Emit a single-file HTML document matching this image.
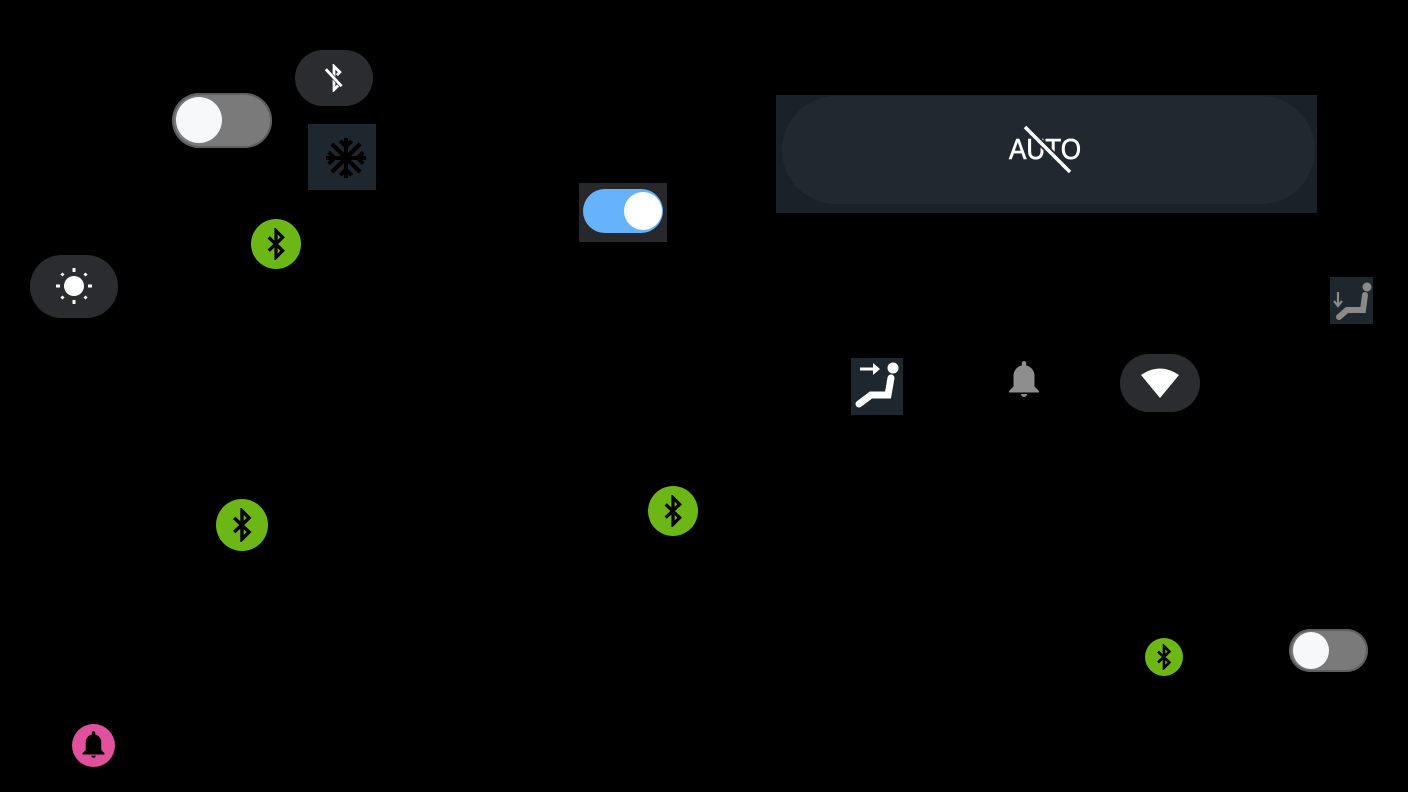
<!DOCTYPE html>
<html><head><meta charset="utf-8"><style>
html,body{margin:0;padding:0;background:#000;width:1408px;height:792px;overflow:hidden;position:relative;font-family:"Liberation Sans",sans-serif}
.a{position:absolute}
.g{position:absolute;border-radius:50%;background:#6cb616;display:flex;align-items:center;justify-content:center}
.tr{position:absolute;background:#7a7a7a;border-radius:30px;box-shadow:inset 0 0 0 2px #5e5e5e}
.kn{position:absolute;background:#f7f8fa;border-radius:50%}
</style></head><body>
<div class="tr" style="left:172px;top:93px;width:100px;height:55px"><div class="kn" style="left:4px;top:4px;width:46px;height:46px"></div></div>
<div class="a" style="left:295px;top:50px;width:78px;height:56px;border-radius:28px;background:#2b2c30"></div>
<svg class="a" style="left:320px;top:64px" width="28" height="28" viewBox="0 0 24 24"><path d="M7 7L17 17L12 22V2L17 7L14.5 9.5" fill="none" stroke="#fff" stroke-width="2.4"/><path d="M4.5 4L19 19.5" stroke="#2b2c30" stroke-width="3.5"/><path d="M5 4.5L18.5 19" stroke="#fff" stroke-width="2.4"/></svg>
<div class="a" style="left:308px;top:124px;width:68px;height:66px;background:#1f272e"></div>
<svg class="a" style="left:323px;top:135px" width="46" height="46" viewBox="0 0 24 24"><g stroke="#000" stroke-width="2.1" fill="none"><path d="M12 1.5V22.5M1.5 12H22.5M4.6 4.6L19.4 19.4M19.4 4.6L4.6 19.4"/><path d="M9 3L12 6L15 3M9 21L12 18L15 21M3 9L6 12L3 15M21 9L18 12L21 15"/></g></svg>
<div class="a" style="left:579px;top:183px;width:88px;height:59px;background:#26282c"></div>
<div class="a" style="left:583px;top:189px;width:80px;height:44px;border-radius:22px;background:#66b3fb"><div class="kn" style="left:41px;top:3px;width:38px;height:38px;background:#fff"></div></div>
<div class="g" style="left:251px;top:219px;width:50px;height:50px"><svg width="32" height="32" viewBox="0 0 24 24"><path d="M6.5 7L17 17L12 22V2L17 7L6.5 17" fill="none" stroke="#000" stroke-width="2.4"/></svg></div>
<div class="g" style="left:216px;top:499px;width:52px;height:52px"><svg width="34" height="34" viewBox="0 0 24 24"><path d="M6.5 7L17 17L12 22V2L17 7L6.5 17" fill="none" stroke="#000" stroke-width="2.4"/></svg></div>
<div class="g" style="left:648px;top:486px;width:50px;height:50px"><svg width="32" height="32" viewBox="0 0 24 24"><path d="M6.5 7L17 17L12 22V2L17 7L6.5 17" fill="none" stroke="#000" stroke-width="2.4"/></svg></div>
<div class="g" style="left:1145px;top:638px;width:38px;height:38px"><svg width="26" height="26" viewBox="0 0 24 24"><path d="M6.5 7L17 17L12 22V2L17 7L6.5 17" fill="none" stroke="#000" stroke-width="2.4"/></svg></div>
<div class="a" style="left:30px;top:255px;width:88px;height:63px;border-radius:32px;background:#2b2c30"></div>
<svg class="a" style="left:54px;top:266px" width="40" height="40" viewBox="0 0 40 40"><circle cx="20" cy="20" r="10" fill="#fff"/><g stroke="#fff" stroke-width="3"><path d="M20 2V6M20 34V38M2 20H6M34 20H38M7.5 7.5L9.5 9.5M30.5 30.5L32.5 32.5M32.5 7.5L30.5 9.5M9.5 30.5L7.5 32.5"/></g></svg>
<div class="a" style="left:776px;top:95px;width:541px;height:118px;background:#1a2128"></div>
<div class="a" style="left:782px;top:96px;width:533px;height:108px;border-radius:54px;background:#212830"></div>
<div class="a" style="left:1009px;top:134px;font-size:29px;color:#fff;transform:scaleX(0.9);transform-origin:left top;-webkit-text-stroke:0.6px #fff">AUTO</div>
<svg class="a" style="left:1020px;top:124px" width="54" height="52"><path d="M5 3L50 48" stroke="#212830" stroke-width="7"/><path d="M5 3L50 48" stroke="#fff" stroke-width="3.5"/></svg>
<div class="a" style="left:1330px;top:277px;width:43px;height:47px;background:#1f272e"></div>
<svg class="a" style="left:1330px;top:277px" width="43" height="47" viewBox="0 0 43 47"><circle cx="37" cy="10" r="4.5" fill="#8a8a8a"/><path d="M35 18L33 33H17L9 40" fill="none" stroke="#8a8a8a" stroke-width="6" stroke-linecap="round"/><path d="M8 15V28M4 24L8 29L12 24" fill="none" stroke="#8a8a8a" stroke-width="2.2"/></svg>
<div class="a" style="left:851px;top:358px;width:52px;height:57px;background:#1f272e"></div>
<svg class="a" style="left:851px;top:358px" width="52" height="57" viewBox="0 0 52 57"><circle cx="42" cy="10" r="5.5" fill="#fff"/><path d="M40 20L37 37H20L8 46" fill="none" stroke="#fff" stroke-width="7" stroke-linecap="round"/><path d="M9 11H26" stroke="#fff" stroke-width="3"/><path d="M22 5L29 11L22 17Z" fill="#fff"/></svg>
<svg class="a" style="left:1006px;top:357px" width="36" height="44" viewBox="0 0 24 28"><path d="M12 2a1.5 1.5 0 0 1 1.5 1.5v1.5A7 7 0 0 1 19 12v7l3 3v1H2v-1l3-3v-7a7 7 0 0 1 5.5-7v-1.5A1.5 1.5 0 0 1 12 2z M10 24h4a2 2 0 0 1-4 0z" fill="#8e8e8e"/></svg>
<div class="a" style="left:1120px;top:354px;width:80px;height:58px;border-radius:29px;background:#2b2c30"></div>
<svg class="a" style="left:1140px;top:366px" width="40" height="34" viewBox="0 0 40 34"><path d="M1 9Q20 -4 39 9L20 32Z" fill="#fff"/></svg>
<div class="tr" style="left:1289px;top:629px;width:79px;height:43px"><div class="kn" style="left:4px;top:3px;width:36px;height:37px"></div></div>
<div class="a" style="left:72px;top:724px;width:43px;height:43px;border-radius:50%;background:#e0509c"></div>
<svg class="a" style="left:80px;top:729px" width="27" height="31" viewBox="0 0 24 28"><path d="M12 2a1.5 1.5 0 0 1 1.5 1.5v1.5A7 7 0 0 1 19 12v7l3 3v1H2v-1l3-3v-7a7 7 0 0 1 5.5-7v-1.5A1.5 1.5 0 0 1 12 2z M10 24h4a2 2 0 0 1-4 0z" fill="#000"/></svg>
</body></html>
